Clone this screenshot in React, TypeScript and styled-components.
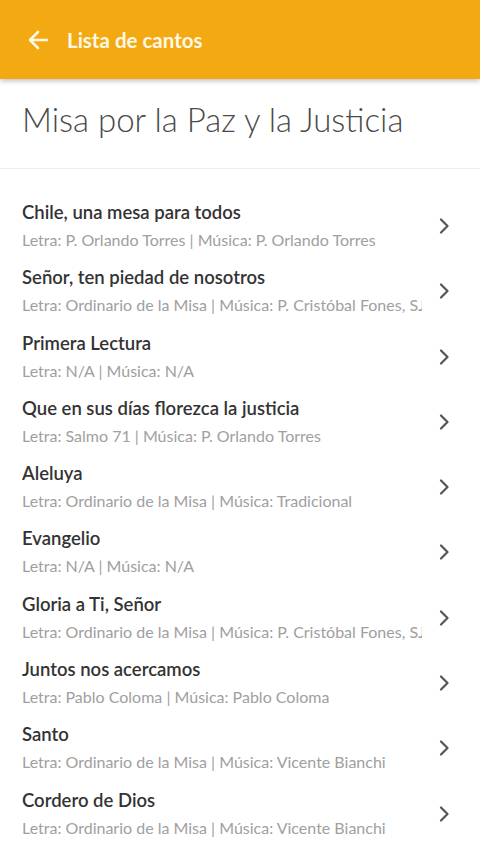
import * as React from 'react';
import styled, { createGlobalStyle } from 'styled-components';

const FONT = "'Lato', 'Noto Sans', 'Liberation Sans', sans-serif";

const GlobalStyle = createGlobalStyle`
  html, body {
    margin: 0;
    padding: 0;
    background: #ffffff;
    font-family: ${FONT};
  }
`;

interface Song {
  title: string;
  lyrics: string;
  music: string;
}

const SONGS: Song[] = [
  { title: 'Chile, una mesa para todos', lyrics: 'P. Orlando Torres', music: 'P. Orlando Torres' },
  { title: 'Señor, ten piedad de nosotros', lyrics: 'Ordinario de la Misa', music: 'P. Cristóbal Fones, SJ' },
  { title: 'Primera Lectura', lyrics: 'N/A', music: 'N/A' },
  { title: 'Que en sus días florezca la justicia', lyrics: 'Salmo 71', music: 'P. Orlando Torres' },
  { title: 'Aleluya', lyrics: 'Ordinario de la Misa', music: 'Tradicional' },
  { title: 'Evangelio', lyrics: 'N/A', music: 'N/A' },
  { title: 'Gloria a Ti, Señor', lyrics: 'Ordinario de la Misa', music: 'P. Cristóbal Fones, SJ' },
  { title: 'Juntos nos acercamos', lyrics: 'Pablo Coloma', music: 'Pablo Coloma' },
  { title: 'Santo', lyrics: 'Ordinario de la Misa', music: 'Vicente Bianchi' },
  { title: 'Cordero de Dios', lyrics: 'Ordinario de la Misa', music: 'Vicente Bianchi' },
];

const Page = styled.div`
  width: 480px;
  height: 854px;
  overflow: hidden;
  display: flex;
  flex-direction: column;
`;

const Toolbar = styled.header`
  height: 79px;
  flex-shrink: 0;
  background: #f3a912;
  box-shadow: 0 2px 5px rgba(0, 0, 0, 0.25);
  display: flex;
  align-items: center;
  padding: 0 0 0 25px;
  gap: 17px;
  position: relative;
  z-index: 1;
`;

const BackButton = styled.button`
  border: 0;
  background: none;
  padding: 0;
  width: 25px;
  height: 25px;
  display: flex;
  align-items: center;
  justify-content: center;
  color: #fff8e6;
`;

const ToolbarTitle = styled.h1`
  margin: 0;
  font-size: 20.5px;
  font-weight: 700;
  color: #fff8e6;
`;

const Heading = styled.h2`
  margin: 0;
  padding: 20px 22px 0;
  height: 69px;
  font-size: 33px;
  font-weight: 300;
  color: #4a4a4a;
  border-bottom: 1px solid #eeeeee;
  flex-shrink: 0;
`;

const List = styled.ul`
  list-style: none;
  margin: 0;
  padding: 29px 0 0;
`;

const Row = styled.li`
  height: 65.3px;
  display: flex;
  align-items: flex-start;
  padding: 0 0 0 22px;
`;

const Texts = styled.div`
  width: 400px;
  overflow: hidden;
  white-space: nowrap;
`;

const SongTitle = styled.div`
  font-size: 18.5px;
  font-weight: 600;
  color: #333333;
  line-height: 28px;
`;

const Credits = styled.div`
  font-size: 16px;
  color: #a0a0a0;
  line-height: 28px;
`;

const Chevron = styled.div`
  width: 36px;
  height: 56px;
  margin-left: 4px;
  display: flex;
  align-items: center;
  justify-content: center;
  color: #555555;
`;

const App: React.FC = () => (
  <Page>
    <GlobalStyle />
    <Toolbar>
      <BackButton aria-label="Volver">
        <svg width="22" height="22" viewBox="0 0 22 22" fill="none" stroke="currentColor" strokeWidth="2.6" strokeLinecap="round" strokeLinejoin="round">
          <path d="M20 11H3M11 3l-8 8 8 8" />
        </svg>
      </BackButton>
      <ToolbarTitle>Lista de cantos</ToolbarTitle>
    </Toolbar>
    <Heading>Misa por la Paz y la Justicia</Heading>
    <List>
      {SONGS.map((song) => (
        <Row key={song.title}>
          <Texts>
            <SongTitle>{song.title}</SongTitle>
            <Credits>
              Letra: {song.lyrics} | Música: {song.music}
            </Credits>
          </Texts>
          <Chevron>
            <svg width="10" height="16" viewBox="0 0 10 16" fill="none" stroke="currentColor" strokeWidth="2.2" strokeLinecap="round" strokeLinejoin="round">
              <path d="M2 1.5l6.5 6.5-6.5 6.5" />
            </svg>
          </Chevron>
        </Row>
      ))}
    </List>
  </Page>
);

export default App;
